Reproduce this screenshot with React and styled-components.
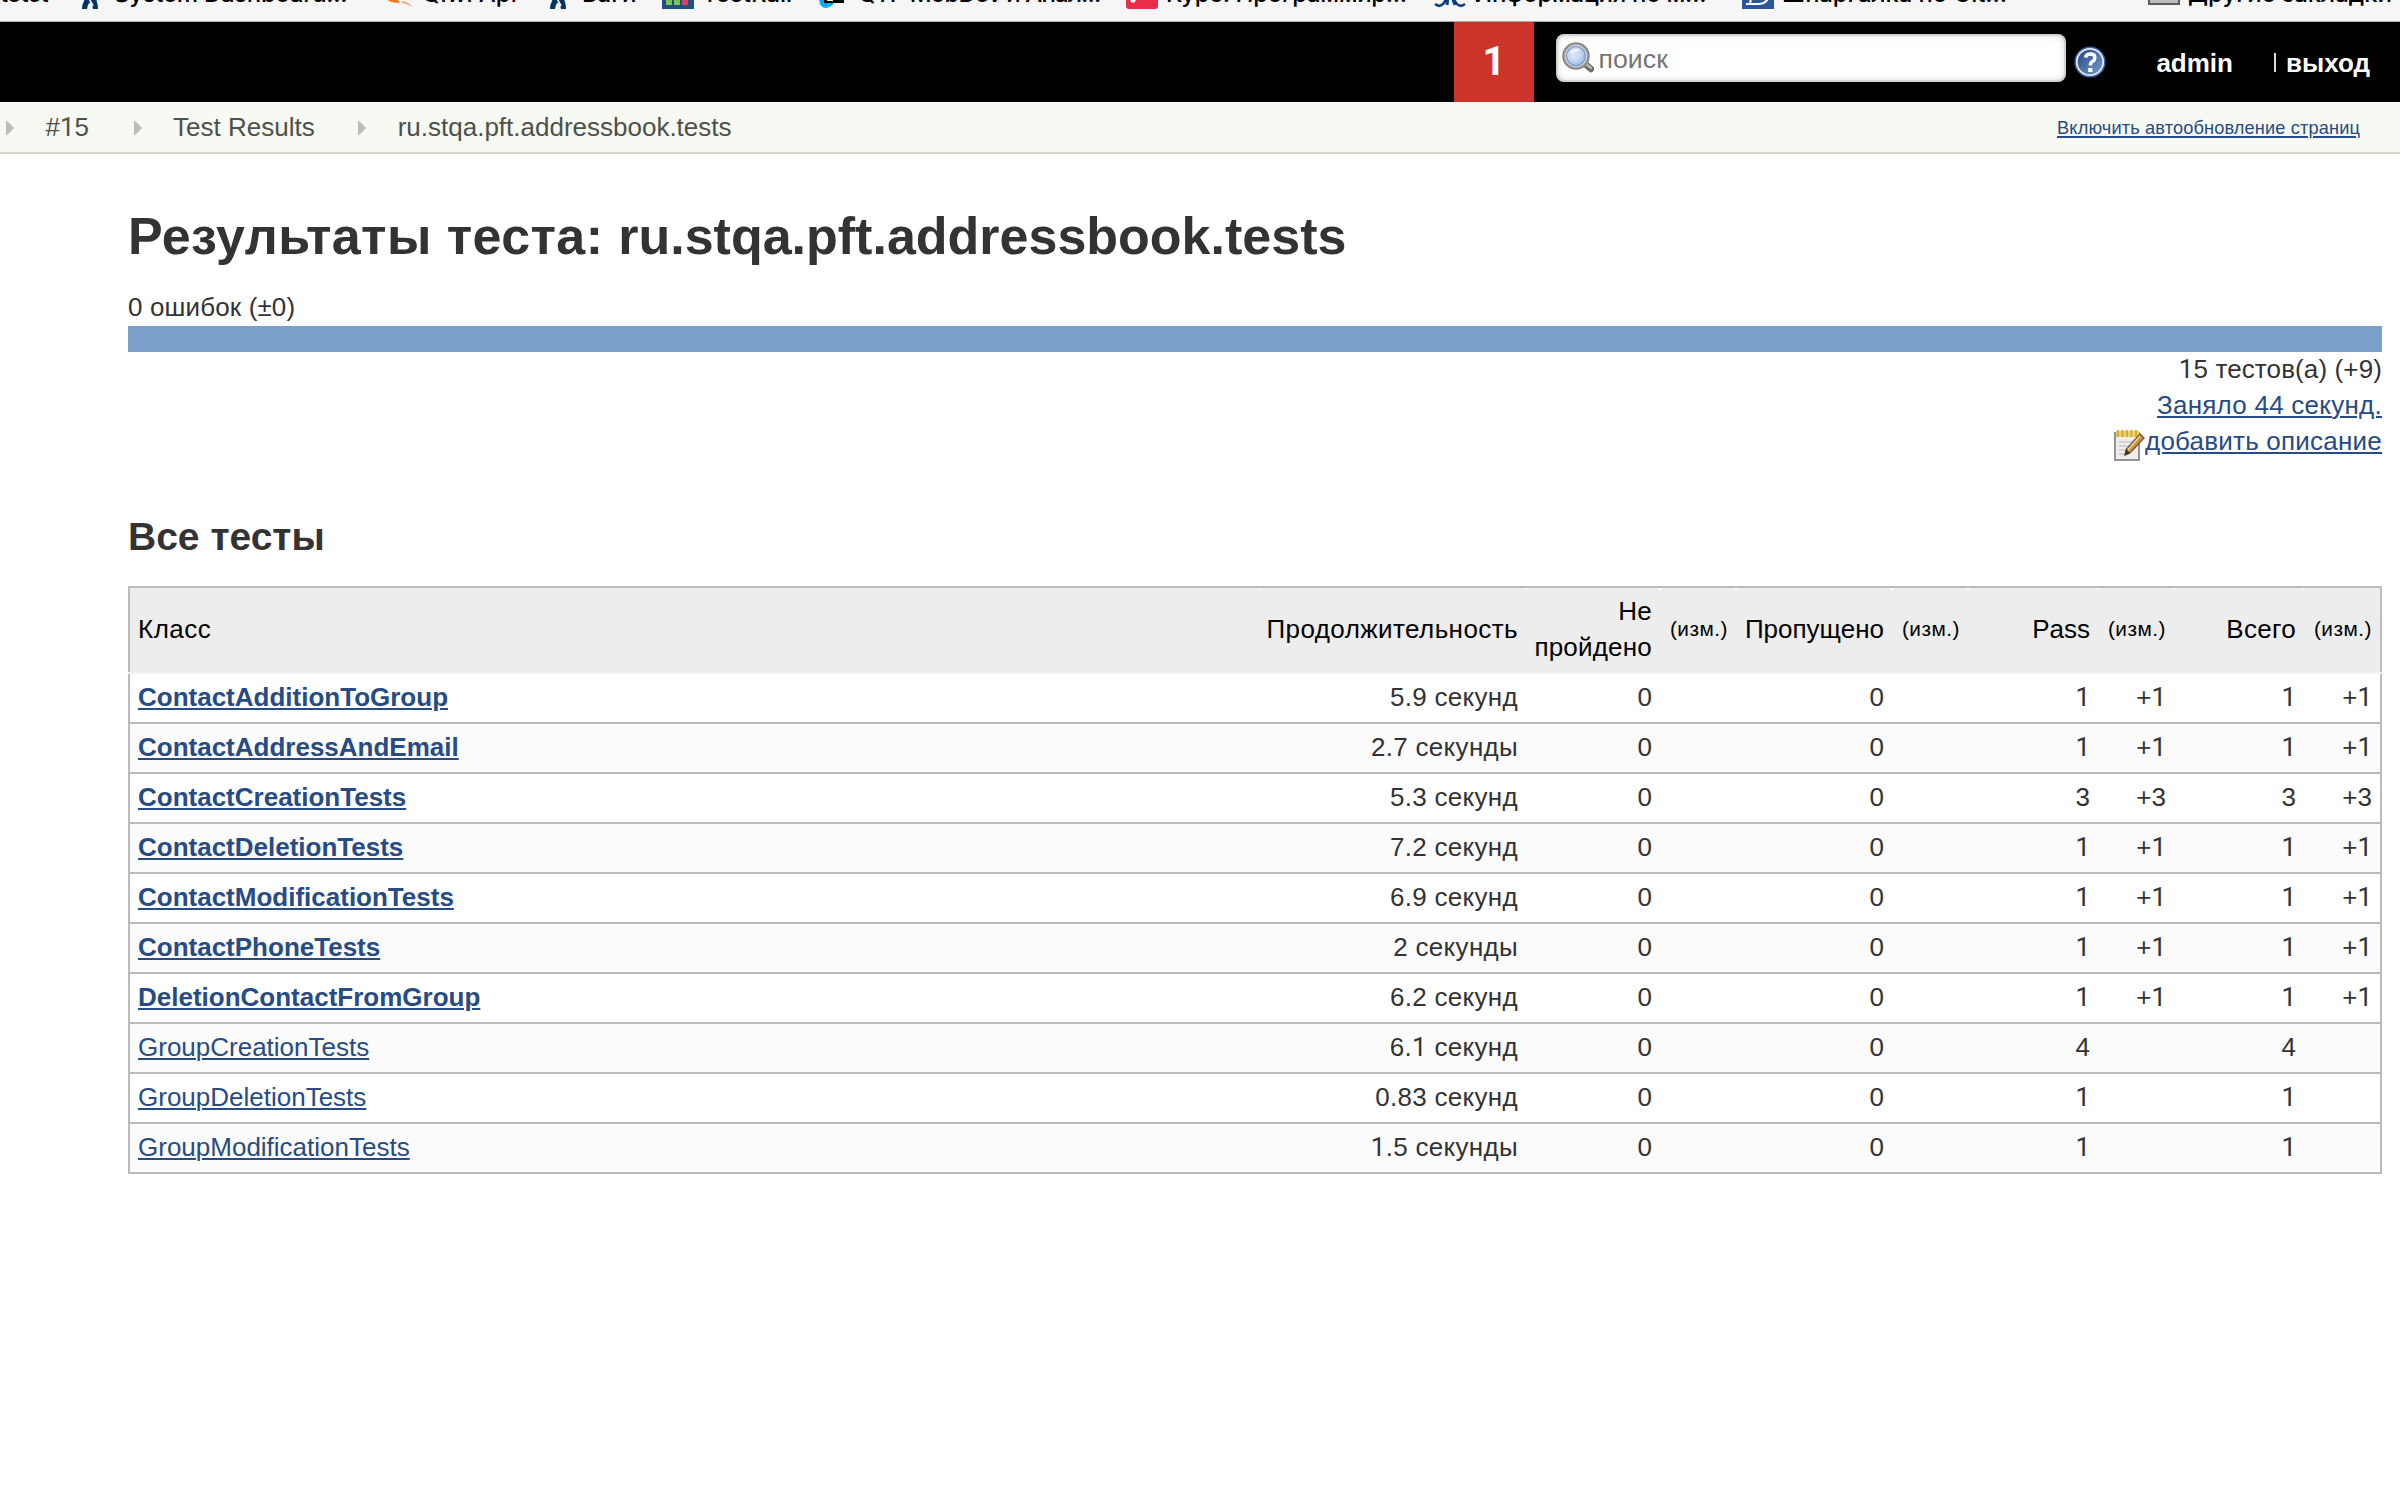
import React from 'react';
import styled, { createGlobalStyle } from 'styled-components';

const link = '#274b84';

const GlobalStyle = createGlobalStyle`
  body {
    margin: 0;
    background: #fff;
    color: #333;
    font: 26px/36px "Liberation Sans", Helvetica, Arial, sans-serif;
  }
`;

const Page = styled.div`
  width: 2400px;
  height: 1490px;
  overflow: hidden;
`;

/* Browser bookmarks strip */
const BookmarksBar = styled.div`
  display: flex;
  align-items: flex-end;
  box-sizing: border-box;
  height: 22px;
  padding-bottom: 12px;
  overflow: hidden;
  background: #f6f6f6;
  border-bottom: 1px solid #a9a9a9;
  color: #000;
  font: 500 24px/32px Inter, "Noto Sans", sans-serif;
`;
const Bookmark = styled.div`
  display: flex;
  flex: none;
  gap: 8px;
  width: ${(p) => p.$w}px;
  height: 32px;
  white-space: nowrap;
  svg { flex: none; display: block; }
`;
const BookmarkLabel = styled.span`
  margin-top: 1px;
  letter-spacing: ${(p) => p.$ls || 0}px;
`;

/* Application header */
const Header = styled.header`
  display: flex;
  justify-content: flex-end;
  align-items: center;
  box-sizing: border-box;
  height: 80px;
  padding-right: 30px;
  background: #000;
  color: #fff;
  font-weight: bold;
`;
const AlertCount = styled.div`
  width: 80px;
  height: 80px;
  margin-right: 22px;
  box-sizing: border-box;
  padding-right: 1px;
  background: #cc3429;
  font: bold 40px/79px Roboto, sans-serif;
  text-align: center;
`;
const SearchBox = styled.label`
  display: flex;
  align-items: center;
  gap: 4px;
  box-sizing: border-box;
  width: 510px;
  height: 48px;
  margin: 0 8px 8px 0;
  padding-left: 6px;
  border-radius: 8px;
  background: #fff;
  box-shadow: inset 0 0 8px rgba(0, 0, 0, 0.22), inset 0 0 0 2px rgba(0, 0, 0, 0.09);
  svg { flex: none; margin-bottom: 2px; }
`;
const SearchInput = styled.input`
  flex: 1;
  min-width: 0;
  height: 44px;
  padding: 2px 0 0;
  border: 0;
  outline: 0;
  background: transparent;
  font: 26.67px "Liberation Sans", Arial, sans-serif;
  letter-spacing: 0.1px;
  &::placeholder { color: #757575; opacity: 1; }
`;
const HeaderLink = styled.a`
  margin: 2px 0 0 ${(p) => p.$ml}px;
  color: #fff;
  text-decoration: none;
`;
const Divider = styled.span`
  width: 2px;
  height: 19px;
  margin-left: 41px;
  background: #ddd;
`;

/* Breadcrumbs */
const CrumbBar = styled.nav`
  display: flex;
  align-items: center;
  height: 48px;
  padding: 0 40px 2px 6px;
  background: #f6faf2;
  border-bottom: 2px solid #d3d7cf;
  color: #4d504b;
`;
const CrumbArrow = styled.svg`
  width: 8px;
  height: 16px;
  margin: 3px 31.5px 0 ${(p) => p.$ml || 0}px;
`;
const Crumb = styled.span`
  padding-top: 2px;
`;
const Link = styled.a`
  color: ${link};
  font-weight: ${(p) => (p.$bold ? 'bold' : 'normal')};
  letter-spacing: ${(p) => p.$ls || 0}px;
  text-decoration: underline;
  text-decoration-thickness: 2px;
  text-underline-offset: 2px;
`;
const RefreshLink = styled(Link)`
  margin-left: auto;
  padding-top: 4px;
  font-size: 18.2px;
`;

/* Main panel */
const Main = styled.main`
  padding: 52px 18px 0 128px;
`;
const Title = styled.h1`
  margin: 0 0 23px;
  font-size: 52px;
  line-height: 60px;
`;
const TitlePrefix = styled.span`
  letter-spacing: 0.4px;
`;
const Failures = styled.div`
  letter-spacing: 0.13px;
`;
const ResultBar = styled.div`
  height: 26px;
  margin: 1px 0 -1px;
  background: #7a9fcb;
`;
const Summary = styled.div`
  display: flex;
  flex-direction: column;
  align-items: flex-end;
`;
const TotalCount = styled.div`
  letter-spacing: 0.12px;
`;
const DescriptionRow = styled.div`
  display: flex;
  height: 36px;
  svg { margin-top: 6px; }
`;
const SectionTitle = styled.h2`
  margin: 56px 0 27px;
  font-size: 39px;
  line-height: 44px;
`;

const Table = styled.table`
  width: 100%;
  table-layout: fixed;
  border-collapse: separate;
  border-spacing: 0;
  border-top: 2px solid #bbb;
`;
const Th = styled.th`
  height: 72px;
  padding: 5px 8px 7px;
  background: #ededed;
  border: 0 solid #bbb;
  border-radius: 4px 4px 0 0;
  color: #000;
  font-weight: normal;
  font-size: ${(p) => (p.$small ? 20.8 : 26)}px;
  letter-spacing: ${(p) => p.$ls || 0}px;
  text-align: right;
  white-space: ${(p) => (p.$small ? 'nowrap' : 'normal')};
  &:first-child { text-align: left; border-left-width: 2px; border-radius: 0; }
  &:last-child { border-right-width: 2px; border-radius: 0; }
`;
const HeadRule = styled.td`
  height: 2px;
  padding: 0;
  background: #f2f2f2;
`;
const Row = styled.tr`
  background: ${(p) => (p.$shaded ? '#fbfbfb' : '#fff')};
`;
const Td = styled.td`
  height: 36px;
  padding: 5px 8px 7px;
  border: 0 solid #bbb;
  border-bottom-width: 2px;
  letter-spacing: ${(p) => p.$ls || 0}px;
  text-align: right;
  white-space: nowrap;
  &:first-child { text-align: left; border-left-width: 2px; }
  &:last-child { border-right-width: 2px; }
`;
const One = styled.span`
  font-family: Roboto, sans-serif;
  line-height: 1;
`;

function Num({ children }) {
  return String(children)
    .split(/(1)/)
    .map((part, i) => (part === '1' ? <One key={i}>1</One> : part));
}

const Lambda = () => (
  <svg width="32" height="32" viewBox="0 0 32 32">
    <path d="M11 22h11q2 5 2 10h-5q0-4-3-7q-3 3-3 7H8q0-5 3-10z" fill="#036" />
    <path d="M14 21q3 3 5 8" stroke="#f6f6f6" strokeWidth="1.5" fill="none" />
  </svg>
);
const Qiwi = () => (
  <svg width="32" height="32" viewBox="0 0 32 32">
    <path d="M4 22q4 4 14 4l-3-4z" fill="#f5761f" />
    <path d="M20 24q7 1 10 6q-6-4-10-4z" fill="#f7a06a" />
  </svg>
);
const Rail = () => (
  <svg width="32" height="32" viewBox="0 0 32 32">
    <path d="M0 0h32v32H0z" fill="#205081" />
    <path d="M4 8h6v20H4zM12 8h6v20h-6z" fill="#7ac455" />
    <path d="M20 8h6v20h-6z" fill="#d8425c" />
  </svg>
);
const Qtp = () => (
  <svg width="32" height="32" viewBox="0 0 32 32">
    <path d="M1 20q0 11 7 11q6-1 9-6V20z" fill="#00aeef" />
    <path d="M6 14h20v12H6z" fill="#000" />
    <path d="M9 14h6v10H9z" fill="#fff" />
  </svg>
);
const Course = () => (
  <svg width="32" height="32" viewBox="0 0 32 32">
    <rect width="32" height="32" rx="3" fill="#ea2c46" />
    <circle cx="7" cy="23" r="2.6" fill="#fff" />
  </svg>
);
const Wiki = () => (
  <svg width="32" height="32" viewBox="0 0 32 32" fill="none" stroke="#0b3f7c" strokeWidth="2.6">
    <path d="M1 27q5 4 9 -1q2-4 4-4M31 27q-5 4-9-1q-2-4-4-4" />
    <path d="M14 20l-1 8M18 20l3 8" strokeWidth="3" />
  </svg>
);
const Sheet = () => (
  <svg width="32" height="32" viewBox="0 0 32 32">
    <path d="M0 0h32v32H0z" fill="#2a579c" />
    <path d="M4 27h12q8 0 10-6M9 21l-1 6" stroke="#fff" strokeWidth="2.2" fill="none" />
  </svg>
);
const Folder = () => (
  <svg width="32" height="32" viewBox="0 0 32 32">
    <path d="M1 4h30v23H1z" fill="#bdbdbd" stroke="#5c5c5c" strokeWidth="2" />
  </svg>
);

const SearchIcon = () => (
  <svg width="32" height="32" viewBox="0 0 32 32">
    <defs>
      <radialGradient id="lens" cx="0.4" cy="0.4" r="0.65">
        <stop offset="0" stopColor="#dfeaf9" />
        <stop offset="0.6" stopColor="#c0d4f0" />
        <stop offset="1" stopColor="#8fb0dd" />
      </radialGradient>
    </defs>
    <path d="M22 22l7 6" stroke="#6b6b66" strokeWidth="6.4" strokeLinecap="round" />
    <path d="M24 23l5 4" stroke="#b9b9b4" strokeWidth="2.4" strokeLinecap="round" />
    <circle cx="14" cy="15" r="12.6" fill="#d9d9d4" stroke="#8a8a86" strokeWidth="2.4" />
    <circle cx="14" cy="15" r="9.6" fill="url(#lens)" stroke="#7f9fce" strokeWidth="1.4" />
    <path d="M9 12q3-4 8-3" stroke="#f3f7fd" strokeWidth="2" fill="none" />
  </svg>
);
const HelpIcon = () => (
  <svg width="32" height="32" viewBox="0 0 32 32">
    <defs>
      <linearGradient id="help" x1="0" y1="0" x2="1" y2="1">
        <stop offset="0.2" stopColor="#34558f" />
        <stop offset="1" stopColor="#7ba0cf" />
      </linearGradient>
    </defs>
    <circle cx="16" cy="16" r="15.6" fill="#3a5f9e" />
    <circle cx="16" cy="16" r="13.2" fill="url(#help)" stroke="#dfe7f3" strokeWidth="1.8" />
    <path d="M11.5 11.6q.6-3.6 4.8-3.6q4.6 0 4.6 3.7q0 2.2-2.4 3.8q-2.2 1.4-2.2 4" fill="none" stroke="#fff" strokeWidth="3.4" />
    <path d="M14.2 22h4.2v4h-4.2z" fill="#fff" />
  </svg>
);
const NoteIcon = () => (
  <svg width="32" height="32" viewBox="0 0 32 32">
    <path d="M2 4h24v27H2z" fill="#eeeeec" stroke="#93938f" strokeWidth="2" />
    <path d="M6 13h16M6 17h14M6 21h11M6 25h9" stroke="#c9c9c6" strokeWidth="1.6" />
    <path d="M3 2h23v6H3z" fill="#eed27a" />
    <path d="M5 1v7M9.5 1v7M14 1v7M18.5 1v7M23 1v7" stroke="#d9ae35" strokeWidth="2.2" />
    <path d="M27 5l4 4L17 24l-5 2l1.5-6z" fill="#c8934a" stroke="#7d5a2a" strokeWidth="1.4" />
    <path d="M27 7L15 21" stroke="#efcf95" strokeWidth="1.6" />
    <path d="M13 20l4 4l-5.5 2.5z" fill="#3c3227" />
  </svg>
);

const bookmarks = [
  { w: 308, icon: <Lambda />, label: 'System Dashboard...', ls: -0.3 },
  { w: 160, icon: <Qiwi />, label: 'Qiwi Api' },
  { w: 120, icon: <Lambda />, label: 'Баги' },
  { w: 156, icon: <Rail />, label: 'TestRail' },
  { w: 308, icon: <Qtp />, label: 'QTP MobDev и Анал...', ls: -0.85 },
  { w: 308, icon: <Course />, label: 'Курс: Программир...', ls: -0.35 },
  { w: 308, icon: <Wiki />, label: 'Информация по м...', ls: -0.25 },
  { w: 406, icon: <Sheet />, label: 'Шпаргалка по Git...', ls: -0.1 },
  { w: 252, icon: <Folder />, label: 'Другие закладки' },
];

const columns = [
  { w: 1130, label: 'Класс', ls: 0.5 },
  { w: 268, label: 'Продолжительность', ls: 0.42 },
  { w: 134, label: 'Не пройдено', ls: 0.2 },
  { w: 76, label: '(изм.)', small: true, ls: 0.5 },
  { w: 156, label: 'Пропущено' },
  { w: 76, label: '(изм.)', small: true, ls: 0.5 },
  { w: 130, label: 'Pass' },
  { w: 76, label: '(изм.)', small: true, ls: 0.5 },
  { w: 130, label: 'Всего', ls: 0.3 },
  { w: 78, label: '(изм.)', small: true, ls: 0.5 },
];

const rows = [
  ['ContactAdditionToGroup', '5.9 секунд', 1, '+1'],
  ['ContactAddressAndEmail', '2.7 секунды', 1, '+1'],
  ['ContactCreationTests', '5.3 секунд', 3, '+3'],
  ['ContactDeletionTests', '7.2 секунд', 1, '+1'],
  ['ContactModificationTests', '6.9 секунд', 1, '+1'],
  ['ContactPhoneTests', '2 секунды', 1, '+1'],
  ['DeletionContactFromGroup', '6.2 секунд', 1, '+1'],
  ['GroupCreationTests', '6.1 секунд', 4, ''],
  ['GroupDeletionTests', '0.83 секунд', 1, ''],
  ['GroupModificationTests', '1.5 секунды', 1, ''],
];

const Arrow = ({ ml }) => (
  <CrumbArrow $ml={ml} viewBox="0 0 8 16">
    <path d="M0 0l8 8l-8 8z" fill="#bbbdb9" />
  </CrumbArrow>
);

export default function App() {
  return (
    <Page>
      <GlobalStyle />
      <BookmarksBar>
        <Bookmark $w={74}>
          <BookmarkLabel $ls={-1}>totet</BookmarkLabel>
        </Bookmark>
        {bookmarks.map((b) => (
          <Bookmark key={b.label} $w={b.w}>
            {b.icon}
            <BookmarkLabel $ls={b.ls}>{b.label}</BookmarkLabel>
          </Bookmark>
        ))}
      </BookmarksBar>

      <Header>
        <AlertCount>1</AlertCount>
        <SearchBox>
          <SearchIcon />
          <SearchInput placeholder="поиск" />
        </SearchBox>
        <HelpIcon />
        <HeaderLink $ml={50}>admin</HeaderLink>
        <Divider />
        <HeaderLink $ml={10}>выход</HeaderLink>
      </Header>

      <CrumbBar>
        <Arrow />
        <Crumb><Num>#15</Num></Crumb>
        <Arrow ml={44.5} />
        <Crumb>Test Results</Crumb>
        <Arrow ml={43.5} />
        <Crumb>ru.stqa.pft.addressbook.tests</Crumb>
        <RefreshLink $ls={0.14}>Включить автообновление страниц</RefreshLink>
      </CrumbBar>

      <Main>
        <Title>
          <TitlePrefix>Результаты теста: </TitlePrefix>
          ru.stqa.pft.addressbook.tests
        </Title>
        <Failures>0 ошибок (±0)</Failures>
        <ResultBar />
        <Summary>
          <TotalCount><Num>15 тестов(а) (+9)</Num></TotalCount>
          <Link $ls={0.25}>Заняло 44 секунд.</Link>
          <DescriptionRow>
            <NoteIcon />
            <Link $ls={0.22}>добавить описание</Link>
          </DescriptionRow>
        </Summary>

        <SectionTitle>Все тесты</SectionTitle>
        <Table>
          <colgroup>
            {columns.map((c, i) => <col key={i} width={c.w} />)}
          </colgroup>
          <thead>
            <tr>
              {columns.map((c, i) => (
                <Th key={i} $small={c.small} $ls={c.ls}>{c.label}</Th>
              ))}
            </tr>
          </thead>
          <tbody>
            <tr><HeadRule colSpan={10} /></tr>
            {rows.map(([name, time, pass, diff], i) => (
              <Row key={name} $shaded={i % 2 === 1}>
                <Td><Link $bold={diff !== ''}>{name}</Link></Td>
                <Td $ls={0.3}><Num>{time}</Num></Td>
                <Td>0</Td>
                <Td />
                <Td>0</Td>
                <Td />
                <Td><Num>{pass}</Num></Td>
                <Td><Num>{diff}</Num></Td>
                <Td><Num>{pass}</Num></Td>
                <Td><Num>{diff}</Num></Td>
              </Row>
            ))}
          </tbody>
        </Table>
      </Main>
    </Page>
  );
}
